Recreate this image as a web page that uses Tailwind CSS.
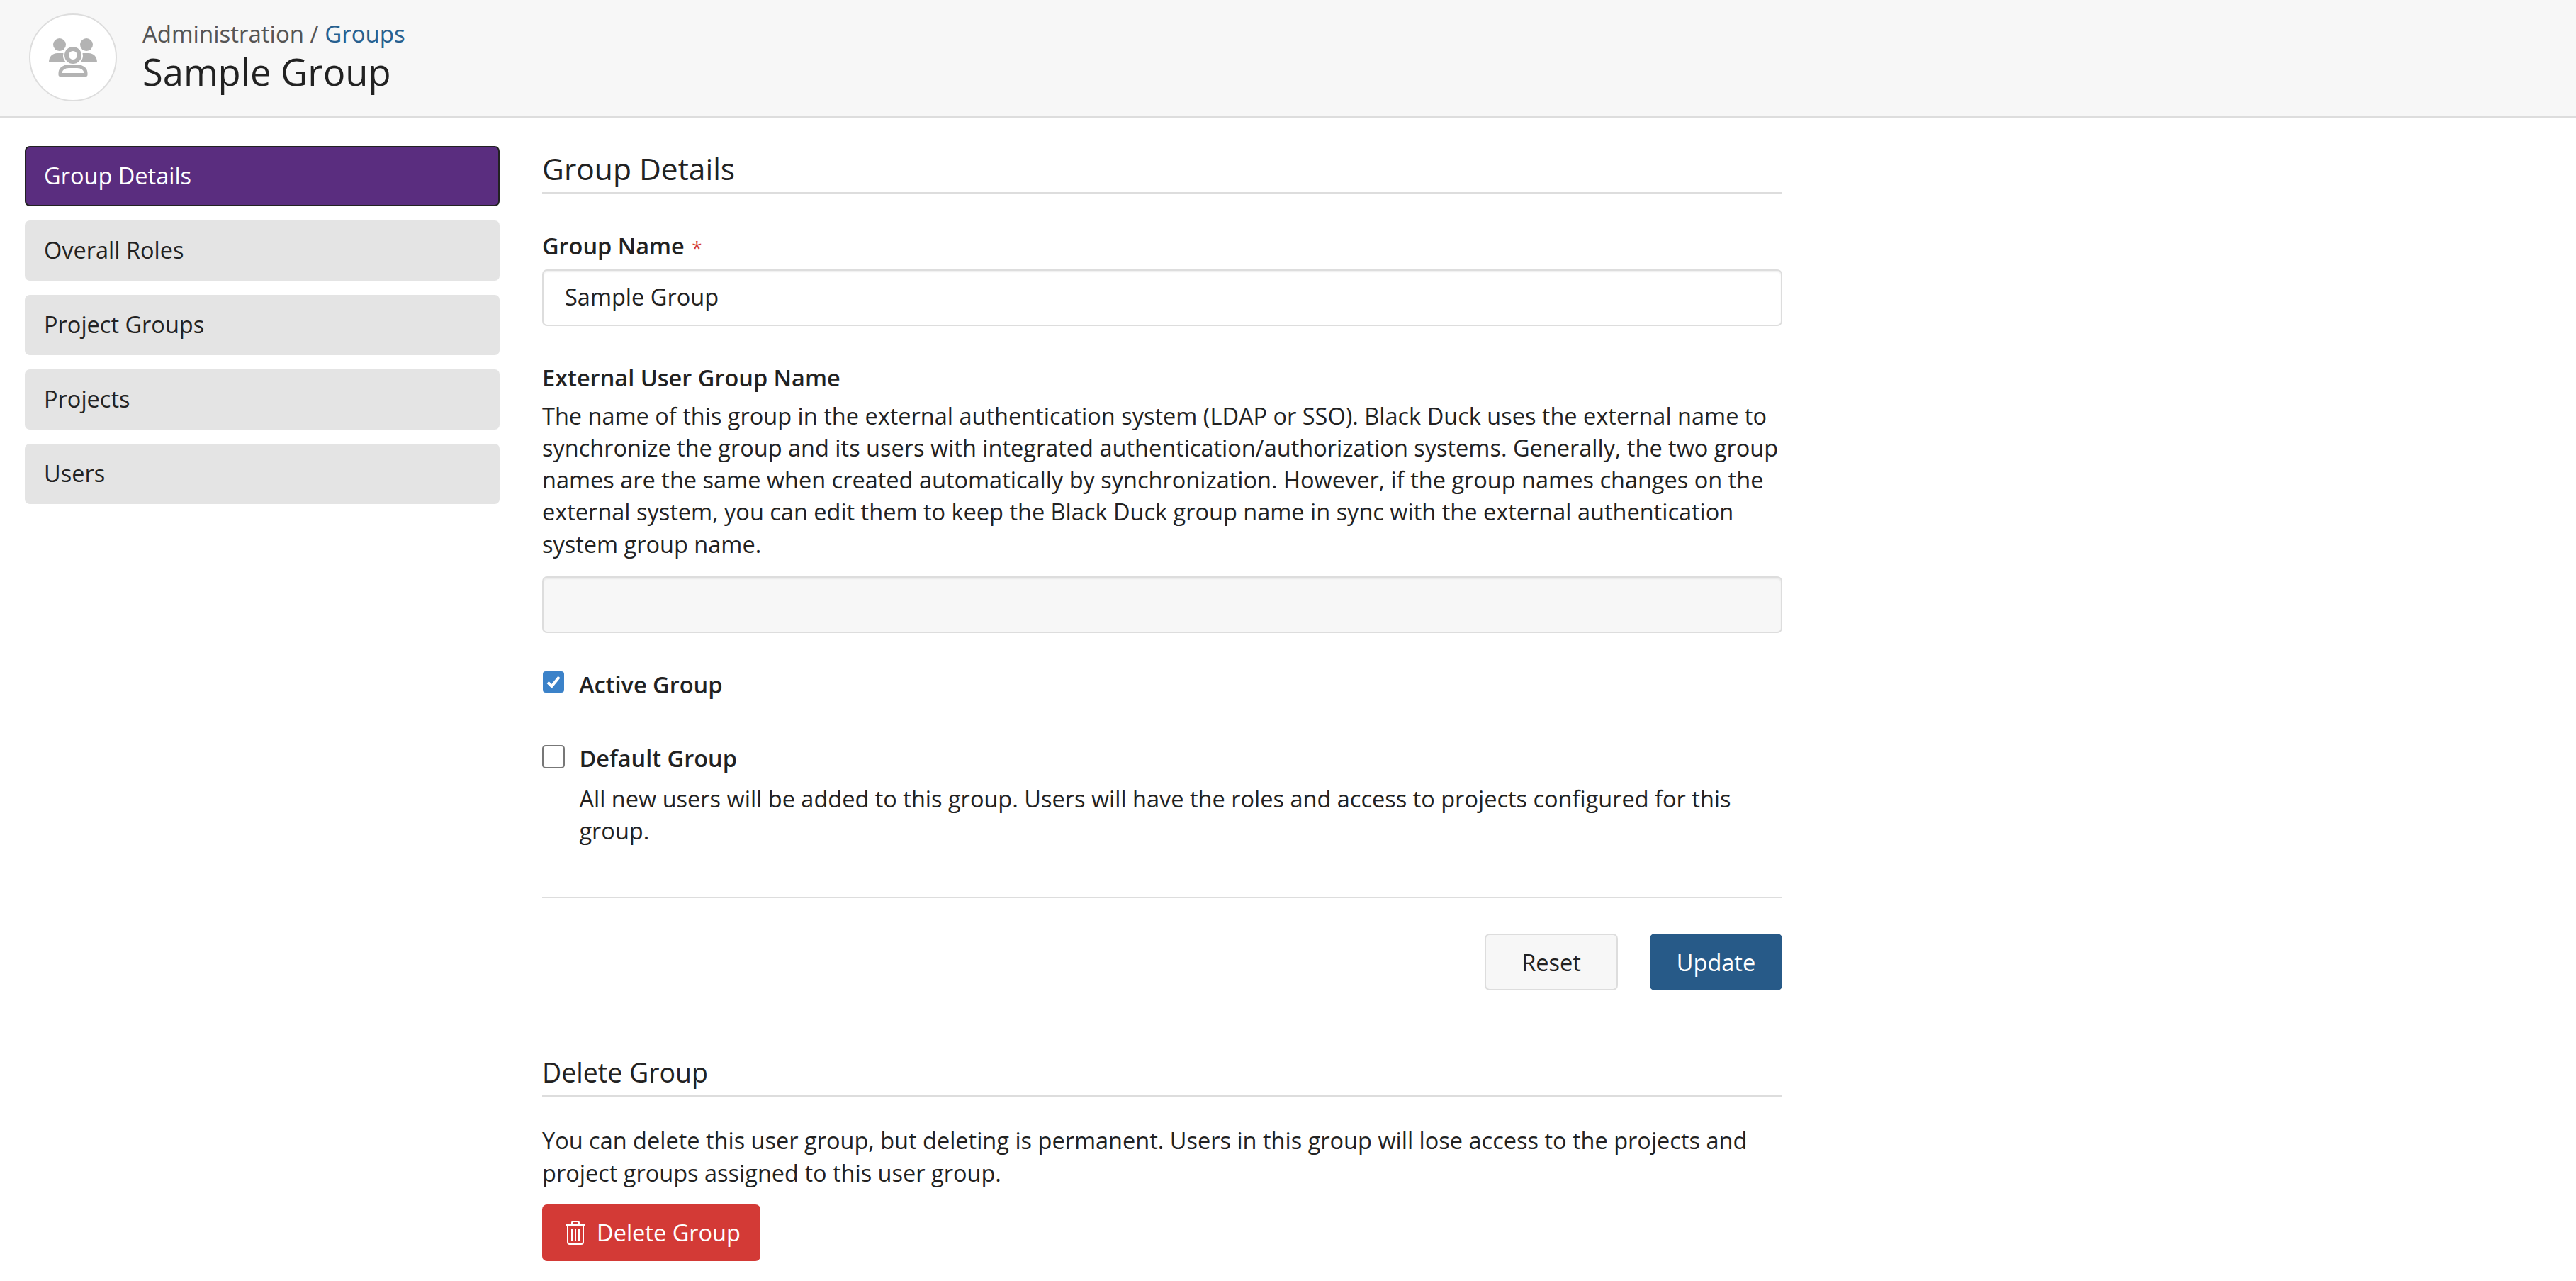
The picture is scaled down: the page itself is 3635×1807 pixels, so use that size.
<!DOCTYPE html>
<html lang="en">
<head>
  <meta charset="UTF-8">
  <title>Sample Group</title>
  <script src="https://cdn.jsdelivr.net/npm/@tailwindcss/browser@4"></script>
</head>
<body class="bg-white text-[#222] font-['Open_Sans',sans-serif] text-[32.5px] leading-[45.3px] h-[1807px] overflow-hidden">

  <!-- header -->
  <div class="h-[166px] bg-[#f7f7f7] border-b-2 border-[#ddd] flex items-start">
    <div class="ml-[41px] mt-[19px] w-[124px] h-[124px] rounded-full bg-white border-2 border-[#ddd] flex items-center justify-center">
      <svg width="70" height="56" viewBox="0 0 70 56" class="fill-[#b3b3b3]">
        <circle cx="16" cy="10" r="9"/>
        <circle cx="54" cy="10" r="9"/>
        <path d="M1 35C1 27 6 22 13 22H21.500A14 14 0 0 0 25 35Z"/>
        <path d="M69 35C69 27 64 22 57 22H48.500A14 14 0 0 1 45 35Z"/>
        <circle cx="35" cy="25" r="9" fill="none" stroke="#b3b3b3" stroke-width="6"/>
        <path d="M17 52.500V50C17 44 23 40.500 29 40.500H41C47 40.500 53 44 53 50V52.500Z" fill="none" stroke="#b3b3b3" stroke-width="5" stroke-linejoin="round"/>
      </svg>
    </div>
    <div class="ml-[36px] mt-[25px]">
      <div class="text-[33px] text-[#555]">Administration / <span class="text-[#27608f]">Groups</span></div>
      <div class="text-[52.500px] leading-[70px] -mt-[4px]">Sample Group</div>
    </div>
  </div>

  <div class="flex items-start pt-[40px]">
    <!-- side nav -->
    <nav class="ml-[35px] w-[670px] flex flex-col gap-[20px]">
      <a class="h-[85px] flex items-center px-[25px] pb-[2px] rounded-[7px] bg-[#5a2d7f] border-2 border-[#222] text-white">Group Details</a>
      <a class="h-[85px] flex items-center px-[27px] pb-[2px] rounded-[7px] bg-[#e4e4e4]">Overall Roles</a>
      <a class="h-[85px] flex items-center px-[27px] pb-[2px] rounded-[7px] bg-[#e4e4e4]">Project Groups</a>
      <a class="h-[85px] flex items-center px-[27px] pb-[2px] rounded-[7px] bg-[#e4e4e4]">Projects</a>
      <a class="h-[85px] flex items-center px-[27px] pb-[2px] rounded-[7px] bg-[#e4e4e4]">Users</a>
    </nav>

    <main class="ml-[60px] w-[1750px]">
      <h2 class="text-[42.500px] leading-[56px] pt-[4px] pb-[5px] border-b-2 border-[#ddd]">Group Details</h2>

      <label class="block font-semibold mt-[51px]">Group Name <span class="text-[26px] font-normal text-[#d33a36] ml-[2px]">*</span></label>
      <input value="Sample Group" class="block w-full h-[80px] mt-[8px] px-[30px] pb-[3px] bg-white border-2 border-[#ddd] rounded-[7px] shadow-[inset_0_2px_2px_rgba(0,0,0,0.06)]">

      <label class="block font-semibold mt-[50px]">External User Group Name</label>
      <p class="mt-[8px]">The name of this group in the external authentication system (LDAP or SSO). Black Duck uses the external name to synchronize the group and its users with integrated authentication/authorization systems. Generally, the two group names are the same when created automatically by synchronization. However, if the group names changes on the external system, you can edit them to keep the Black Duck group name in sync with the external authentication system group name.</p>
      <input class="block w-full h-[80px] mt-[23px] px-[30px] bg-[#f7f7f7] border-2 border-[#ddd] rounded-[7px] shadow-[inset_0_2px_2px_rgba(0,0,0,0.06)]">

      <div class="flex items-start mt-[50px]">
        <span class="w-[30px] h-[30px] ml-[1px] mt-[4px] rounded-[4px] bg-[#3b82c9] flex items-center justify-center">
          <svg width="22" height="20" viewBox="0 0 22 20" fill="none" stroke="#fff" stroke-width="4"><path d="M3 10.500 8.500 16 19 3"/></svg>
        </span>
        <span class="ml-[21px] font-semibold">Active Group</span>
      </div>

      <div class="flex items-start mt-[59px]">
        <span class="w-[33px] h-[33px] mt-[4px] rounded-[5px] bg-white border-2 border-[#777]"></span>
        <div class="ml-[20px]">
          <div class="font-semibold">Default Group</div>
          <p class="mt-[11px]">All new users will be added to this group. Users will have the roles and access to projects configured for this group.</p>
        </div>
      </div>

      <div class="border-t-2 border-[#ddd] mt-[71px] pt-[50px] flex justify-end gap-[45px]">
        <button class="w-[188px] h-[80px] rounded-[7px] bg-[#f7f7f7] border-2 border-[#ddd]">Reset</button>
        <button class="w-[187px] h-[80px] rounded-[7px] bg-[#275a88] text-white">Update</button>
      </div>

      <h2 class="text-[37.500px] leading-[52px] pb-[6px] border-b-2 border-[#ddd] mt-[90px]">Delete Group</h2>
      <p class="mt-[39px]">You can delete this user group, but deleting is permanent. Users in this group will lose access to the projects and project groups assigned to this user group.</p>
      <button class="flex items-center justify-center gap-[15px] pl-[4px] w-[308px] h-[80px] mt-[22px] rounded-[7px] bg-[#d33a36] text-white">
        <svg width="30" height="34" viewBox="0 0 30 34" fill="none" stroke="#fff" stroke-width="2"><path d="M1 6h28M10 6V3c0-1 1-2 2-2h6c1 0 2 1 2 2v3M4 6v24c0 2 1 3 3 3h16c2 0 3-1 3-3V6M10 11v17M15 11v17M20 11v17"/></svg>
        Delete Group
      </button>
    </main>
  </div>
</body>
</html>
